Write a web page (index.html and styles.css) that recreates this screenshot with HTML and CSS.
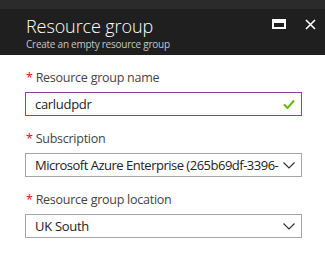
FILE: index.html
```html
<!DOCTYPE html>
<html lang="en">
<head>
    <meta charset="UTF-8">
    <title>Resource group</title>
    <link rel="stylesheet" href="styles.css">
</head>
<body>

<div class="blade">
    <div class="topstrip"></div>
    <div class="header">
        <div class="titles">
            <h2>Resource group</h2>
            <p>Create an empty resource group</p>
        </div>
        <div class="actions">
            <svg width="14" height="10" viewBox="0 0 14 10">
                <rect x="1" y="1" width="12" height="8" fill="none" stroke="#fff" stroke-width="2"/>
                <rect x="1" y="1" width="12" height="3" fill="#fff"/>
            </svg>
            <svg width="11" height="11" viewBox="0 0 11 11">
                <path d="M1 1 L10 10 M10 1 L1 10" stroke="#fff" stroke-width="1.6"/>
            </svg>
        </div>
    </div>

    <div class="form">
        <div class="field">
            <label><span class="req">*</span> Resource group name</label>
            <div class="box valid">
                <span>carludpdr</span>
                <svg width="12" height="10" viewBox="0 0 12 10">
                    <path d="M1 5.5 L4.5 9 L11 1.5" fill="none" stroke="#6bb700" stroke-width="2"/>
                </svg>
            </div>
        </div>

        <div class="field">
            <label><span class="req">*</span> Subscription</label>
            <div class="box">
                <span class="clip">Microsoft Azure Enterprise (265b69df-3396-</span>
                <svg class="chev" width="12" height="7" viewBox="0 0 12 7">
                    <path d="M0.5 0.5 L6 6 L11.5 0.5" fill="none" stroke="#333" stroke-width="1.2"/>
                </svg>
            </div>
        </div>

        <div class="field">
            <label><span class="req">*</span> Resource group location</label>
            <div class="box">
                <span>UK South</span>
                <svg class="chev" width="12" height="7" viewBox="0 0 12 7">
                    <path d="M0.5 0.5 L6 6 L11.5 0.5" fill="none" stroke="#333" stroke-width="1.2"/>
                </svg>
            </div>
        </div>
    </div>
</div>

</body>
</html>
```

FILE: styles.css
```css
body {
    margin: 0;
    font-family: "Open Sans", "Noto Sans", sans-serif;
    background: #fff;
}
.topstrip {
    height: 9px;
    background: #2b2b2b;
}
.header {
    height: 46px;
    background: #1f1f1f;
    display: flex;
    justify-content: space-between;
    padding: 0 9px 0 26px;
}
.titles h2 {
    margin: 6px 0 0;
    font-size: 18px;
    font-weight: 300;
    letter-spacing: -0.1px;
    color: #fff;
    line-height: 22px;
}
.titles p {
    margin: 0;
    font-size: 10px;
    letter-spacing: -0.25px;
    color: #c4c4c4;
    line-height: 14px;
}
.actions {
    display: flex;
    align-items: flex-start;
    gap: 19px;
    padding-top: 10px;
}
.form {
    padding: 14px 23px 0 25px;
}
.field {
    margin-bottom: 14px;
}
.field label {
    display: block;
    font-size: 12.5px;
    letter-spacing: -0.25px;
    color: #444;
    line-height: 18px;
    margin-bottom: 5px;
    padding-left: 1px;
}
.req {
    color: #e00b1c;
}
.box {
    height: 22px;
    border: 1px solid #a6a6a6;
    display: flex;
    align-items: center;
    justify-content: space-between;
    gap: 2px;
    padding: 0 6px 0 9px;
    font-size: 13px;
    letter-spacing: -0.3px;
    color: #222;
}
.box.valid {
    border-color: #8c3fa5;
}
.clip {
    white-space: nowrap;
    letter-spacing: -0.5px;
}
.chev {
    flex-shrink: 0;
}
```
